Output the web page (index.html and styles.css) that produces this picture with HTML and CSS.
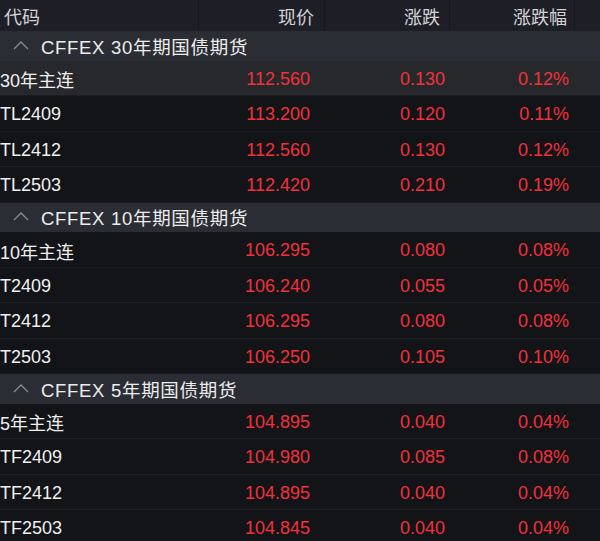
FILE: index.html
```html
<!DOCTYPE html>
<html lang="zh-CN">
<head>
<meta charset="utf-8">
<link rel="stylesheet" href="styles.css">
</head>
<body>
<div class="table">
  <div class="head">
    <div class="hc name">代码</div>
    <div class="hc price">现价</div>
    <div class="hc chg">涨跌</div>
    <div class="hc pct">涨跌幅</div>
    <div class="hc tail"></div>
  </div>

  <div class="group">
    <svg class="chev" width="16" height="10" viewBox="0 0 16 10"><polyline points="1,9 8,2 15,9" fill="none" stroke="#8a8b8e" stroke-width="1.3"/></svg>
    <span class="gtitle">CFFEX 30年期国债期货</span>
  </div>
  <div class="row active"><span class="c name">30年主连</span><span class="c price">112.560</span><span class="c chg">0.130</span><span class="c pct">0.12%</span></div>
  <div class="row"><span class="c name">TL2409</span><span class="c price">113.200</span><span class="c chg">0.120</span><span class="c pct">0.11%</span></div>
  <div class="row"><span class="c name">TL2412</span><span class="c price">112.560</span><span class="c chg">0.130</span><span class="c pct">0.12%</span></div>
  <div class="row"><span class="c name">TL2503</span><span class="c price">112.420</span><span class="c chg">0.210</span><span class="c pct">0.19%</span></div>

  <div class="group">
    <svg class="chev" width="16" height="10" viewBox="0 0 16 10"><polyline points="1,9 8,2 15,9" fill="none" stroke="#8a8b8e" stroke-width="1.3"/></svg>
    <span class="gtitle">CFFEX 10年期国债期货</span>
  </div>
  <div class="row"><span class="c name">10年主连</span><span class="c price">106.295</span><span class="c chg">0.080</span><span class="c pct">0.08%</span></div>
  <div class="row"><span class="c name">T2409</span><span class="c price">106.240</span><span class="c chg">0.055</span><span class="c pct">0.05%</span></div>
  <div class="row"><span class="c name">T2412</span><span class="c price">106.295</span><span class="c chg">0.080</span><span class="c pct">0.08%</span></div>
  <div class="row"><span class="c name">T2503</span><span class="c price">106.250</span><span class="c chg">0.105</span><span class="c pct">0.10%</span></div>

  <div class="group">
    <svg class="chev" width="16" height="10" viewBox="0 0 16 10"><polyline points="1,9 8,2 15,9" fill="none" stroke="#8a8b8e" stroke-width="1.3"/></svg>
    <span class="gtitle">CFFEX 5年期国债期货</span>
  </div>
  <div class="row"><span class="c name">5年主连</span><span class="c price">104.895</span><span class="c chg">0.040</span><span class="c pct">0.04%</span></div>
  <div class="row"><span class="c name">TF2409</span><span class="c price">104.980</span><span class="c chg">0.085</span><span class="c pct">0.08%</span></div>
  <div class="row"><span class="c name">TF2412</span><span class="c price">104.895</span><span class="c chg">0.040</span><span class="c pct">0.04%</span></div>
  <div class="row"><span class="c name">TF2503</span><span class="c price">104.845</span><span class="c chg">0.040</span><span class="c pct">0.04%</span></div>
</div>
</body>
</html>
```

FILE: styles.css
```css
html, body {
  margin: 0;
  padding: 0;
  background: #121418;
  overflow: hidden;
}
body {
  width: 600px;
  height: 541px;
  font-family: "Liberation Sans", "Noto Sans CJK SC", sans-serif;
  font-size: 18px;
}
.table {
  display: flex;
  flex-direction: column;
}
.head {
  height: 31px;
  display: grid;
  grid-template-columns: 199px 126px 125px 125px 25px;
  background: #1e1f26;
  color: #d2d2d4;
}
.hc {
  display: flex;
  align-items: center;
  border-right: 1px solid #17181d;
  box-sizing: border-box;
}
.hc.tail { border-right: none; }
.hc.name { padding-left: 4px; }
.hc.price { justify-content: flex-end; padding-right: 10px; }
.hc.chg { justify-content: flex-end; padding-right: 9px; }
.hc.pct { justify-content: flex-end; padding-right: 7px; }

.group {
  height: 29.5px;
  background: #2a2d33;
  display: flex;
  align-items: center;
  color: #ececec;
  box-sizing: border-box;
}
.chev {
  margin-left: 13px;
  margin-right: 12px;
  margin-top: -2px;
}
.gtitle {
  font-size: 18.5px;
  letter-spacing: 0.7px;
}
.row {
  height: 35.5px;
  display: grid;
  grid-template-columns: 199px 126px 125px 125px 25px;
  align-items: center;
  padding-top: 3px;
  border-bottom: 1px solid #1b1d21;
  box-sizing: border-box;
  background: #121418;
}
.row.active { background: #26282c; }
.c { white-space: nowrap; }
.c.name { color: #f0f0f0; padding-left: 0; }
.c.price, .c.chg, .c.pct {
  color: #f2313b;
  text-align: right;
}
.c.price { padding-right: 15px; }
.c.chg { padding-right: 5px; }
.c.pct { padding-right: 6px; }
```
